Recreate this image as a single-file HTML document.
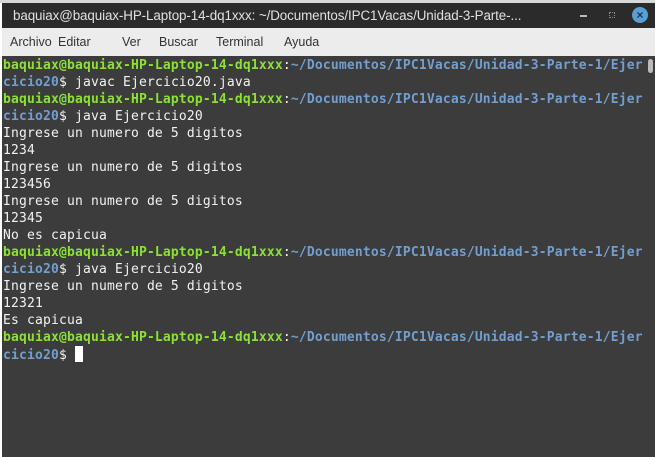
<!DOCTYPE html>
<html><head><meta charset="utf-8"><style>
html,body{margin:0;padding:0;width:655px;height:457px;overflow:hidden;background:#fff;}
#top{position:absolute;left:0;top:0;width:655px;height:3px;background:#d8d8d8;}
#title{position:absolute;left:2px;top:3px;width:653px;height:25px;background:#2b2b2b;color:#e0e0e0;font:13.4px "Liberation Sans",sans-serif;}
#title .t{position:absolute;left:11px;top:5px;letter-spacing:-0.1px;}
#menu{position:absolute;left:2px;top:28px;width:653px;height:28px;background:#ececec;color:#333;font:12.5px "Liberation Sans",sans-serif;}
#menu span{position:absolute;top:7px;}
#term{position:absolute;left:2px;top:56px;width:653px;height:401px;background:#3c3c3c;}
pre{margin:0;position:absolute;left:1px;top:1px;font:bold 13px/17px "DejaVu Sans Mono","Liberation Mono",monospace;letter-spacing:0.17px;color:#f2f2f2;}
pre .n,pre .c{font-weight:normal;}
.g{color:#8ae234;}.b{color:#729fcf;}
.cur{display:inline-block;width:8px;height:16px;background:#fff;vertical-align:-3px;}
#sb{position:absolute;left:646px;top:3px;width:5px;height:14px;background:#bbb;border-radius:3px;}
</style></head><body>
<div id="top"></div>
<div id="title"><span class="t">baquiax@baquiax-HP-Laptop-14-dq1xxx: ~/Documentos/IPC1Vacas/Unidad-3-Parte-...</span>
<div style="position:absolute;left:578px;top:12px;width:7px;height:2px;background:#bbb"></div>
<div style="position:absolute;left:607px;top:9px;width:6px;height:6px;border:1px dotted #888;box-sizing:border-box"></div>
<div style="position:absolute;left:630px;top:4px;width:16px;height:16px;border-radius:50%;background:#5a9fd4;color:#1c3550;font:bold 12px/16px 'Liberation Sans',sans-serif;text-align:center">×</div>
</div>
<div id="menu"><span style="left:8px">Archivo</span><span style="left:56px">Editar</span><span style="left:120px">Ver</span><span style="left:157px">Buscar</span><span style="left:214px">Terminal</span><span style="left:282px">Ayuda</span></div>
<div id="term"><div id="sb"></div>
<pre><span class="g">baquiax@baquiax-HP-Laptop-14-dq1xxx</span><span class="c">:</span><span class="b">~/Documentos/IPC1Vacas/Unidad-3-Parte-1/Ejer
cicio20</span><span class="n">$ javac Ejercicio20.java</span>
<span class="g">baquiax@baquiax-HP-Laptop-14-dq1xxx</span><span class="c">:</span><span class="b">~/Documentos/IPC1Vacas/Unidad-3-Parte-1/Ejer
cicio20</span><span class="n">$ java Ejercicio20
Ingrese un numero de 5 digitos
1234
Ingrese un numero de 5 digitos
123456
Ingrese un numero de 5 digitos
12345
No es capicua</span>
<span class="g">baquiax@baquiax-HP-Laptop-14-dq1xxx</span><span class="c">:</span><span class="b">~/Documentos/IPC1Vacas/Unidad-3-Parte-1/Ejer
cicio20</span><span class="n">$ java Ejercicio20
Ingrese un numero de 5 digitos
12321
Es capicua</span>
<span class="g">baquiax@baquiax-HP-Laptop-14-dq1xxx</span><span class="c">:</span><span class="b">~/Documentos/IPC1Vacas/Unidad-3-Parte-1/Ejer
cicio20</span><span class="n">$ <span class="cur"></span></span></pre>
</div>
</body></html>
